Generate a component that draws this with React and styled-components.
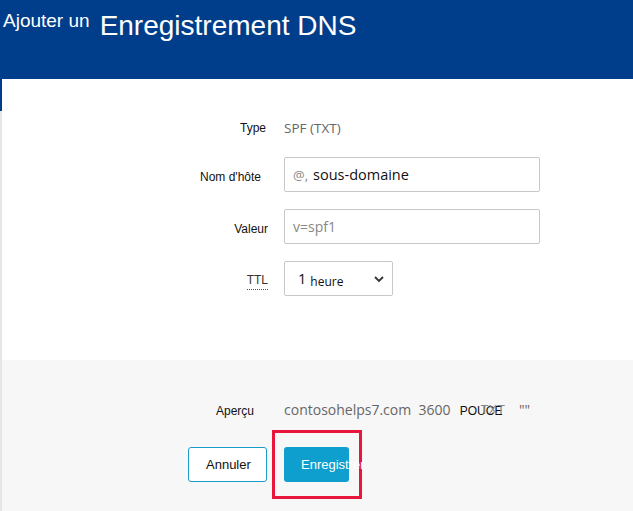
import styled, { createGlobalStyle } from 'styled-components';

const Global = createGlobalStyle`
  html, body { margin: 0; padding: 0; background: #fff; }
  body { font-family: "Liberation Sans", Arial, sans-serif; }
`;

const Page = styled.div`
  width: 633px;
  height: 511px;
  overflow: hidden;
  display: flex;
  flex-direction: column;
`;

const Header = styled.div`
  height: 79px;
  flex-shrink: 0;
  background: #003e8c;
  color: #fff;
  display: flex;
  align-items: flex-start;
  padding-left: 3px;
`;

const Small = styled.span`
  font-size: 19px;
  margin-top: 10px;
`;

const Big = styled.span`
  font-size: 28px;
  margin-left: 10px;
  margin-top: 10px;
`;

const Body = styled.div`
  flex: 1;
  display: flex;
  flex-direction: column;
  border-left: 2px solid #e6e6e6;
  position: relative;
`;

const Marker = styled.div`
  position: absolute;
  left: -2px;
  top: 0;
  width: 2px;
  height: 32px;
  background: #003e8c;
`;

const Form = styled.div`
  height: 281px;
  flex-shrink: 0;
  box-sizing: border-box;
  background: #fff;
  display: grid;
  grid-template-columns: 264px 256px;
  column-gap: 18px;
  row-gap: 17px;
  align-content: start;
  padding-top: 37px;
`;

const Label = styled.div`
  font-size: 12px;
  color: #111;
  text-align: right;
  align-self: center;
  padding-top: ${p => p.$down || 0}px;
  padding-right: ${p => p.$pr || 0}px;
  margin-right: ${p => p.$mr || 0}px;
`;

const Dotted = styled.span`
  border-bottom: 1px dotted #555;
  padding-bottom: 2px;
  color: #333;
`;

const Static = styled.div`
  font-family: "Open Sans", sans-serif;
  font-size: 13.5px;
  color: #666;
  height: 24px;
  line-height: 24px;
`;

const Field = styled.div`
  height: 33px;
  border: 1px solid #c8c8c8;
  border-radius: 2px;
  box-sizing: content-box;
  display: flex;
  align-items: center;
  padding: 0 8px;
  width: ${p => p.$w ? `${p.$w}px` : 'auto'};
  font-family: "Open Sans", sans-serif;
`;

const Hint = styled.span`
  font-size: 13px;
  color: #888;
  margin-right: 5px;
`;

const Text = styled.span`
  font-size: 14.5px;
  color: #111;
  margin-left: ${p => p.$ml || 0}px;
`;

const Placeholder = styled.span`
  font-size: 14px;
  color: #888;
`;

const Unit = styled.span`
  font-size: 12px;
  color: #111;
  margin: 6px 0 0 4px;
  flex: 1;
`;

const Footer = styled.div`
  flex: 1;
  background: #f7f7f7;
  display: flex;
  flex-direction: column;
`;

const PreviewRow = styled.div`
  display: grid;
  grid-template-columns: 258px auto;
  column-gap: 24px;
  align-items: center;
  margin-top: 40px;
`;

const Preview = styled.div`
  font-family: "Open Sans", sans-serif;
  font-size: 14px;
  color: #666;
  white-space: pre;
  display: flex;
  align-items: center;
`;

const Pouce = styled.span`
  font-family: "Liberation Sans", sans-serif;
  font-size: 12px;
  color: #111;
  margin-top: 3px;
  margin-left: 2px;
`;

const Txt = styled.span`
  font-family: "Liberation Sans", sans-serif;
  font-size: 13px;
  color: #888;
  margin-left: -22px;
  margin-right: 14px;
`;

const Buttons = styled.div`
  display: flex;
  align-items: center;
  padding-left: 186px;
  margin-top: 11px;
`;

const Button = styled.div`
  height: 35px;
  box-sizing: border-box;
  border-radius: 3px;
  display: flex;
  align-items: center;
  font-size: 13px;
  white-space: nowrap;
  padding-left: 17px;
  width: ${p => p.$w}px;
  background: ${p => p.$primary ? '#0e9fcf' : '#fff'};
  color: ${p => p.$primary ? '#fff' : '#111'};
  border: ${p => p.$primary ? 'none' : '1px solid #1a9cc9'};
`;

const Highlight = styled.div`
  border: 3px solid #e8163c;
  padding: 14px 10px 14px 9px;
  margin-left: 5px;
`;

export default function App() {
  return (
    <Page>
      <Global />
      <Header>
        <Small>Ajouter un</Small>
        <Big>Enregistrement DNS</Big>
      </Header>
      <Body>
        <Marker />
        <Form>
          <Label>Type</Label>
          <Static>SPF (TXT)</Static>

          <Label $down={4} $pr={5}>Nom d'hôte</Label>
          <Field>
            <Hint>@,</Hint>
            <Text>sous-domaine</Text>
          </Field>

          <Label $down={4} $mr={-2}>Valeur</Label>
          <Field>
            <Placeholder>v=spf1</Placeholder>
          </Field>

          <Label $down={2} $mr={-2}><Dotted>TTL</Dotted></Label>
          <Field $w={91}>
            <Text $ml={5}>1</Text>
            <Unit>heure</Unit>
            <svg width="10" height="8" viewBox="0 0 10 8">
              <path d="M1 2 L5 6 L9 2" fill="none" stroke="#333" strokeWidth="1.8" />
            </svg>
          </Field>
        </Form>
        <Footer>
          <PreviewRow>
            <Label $down={2} $pr={6}>Aperçu</Label>
            <Preview>
              {'contosohelps7.com  3600  '}
              <Pouce>POUCE</Pouce>
              <Txt>TXT</Txt>
              {'""'}
            </Preview>
          </PreviewRow>
          <Buttons>
            <Button $w={79}>Annuler</Button>
            <Highlight>
              <Button $primary $w={65}>Enregistrer</Button>
            </Highlight>
          </Buttons>
        </Footer>
      </Body>
    </Page>
  );
}
